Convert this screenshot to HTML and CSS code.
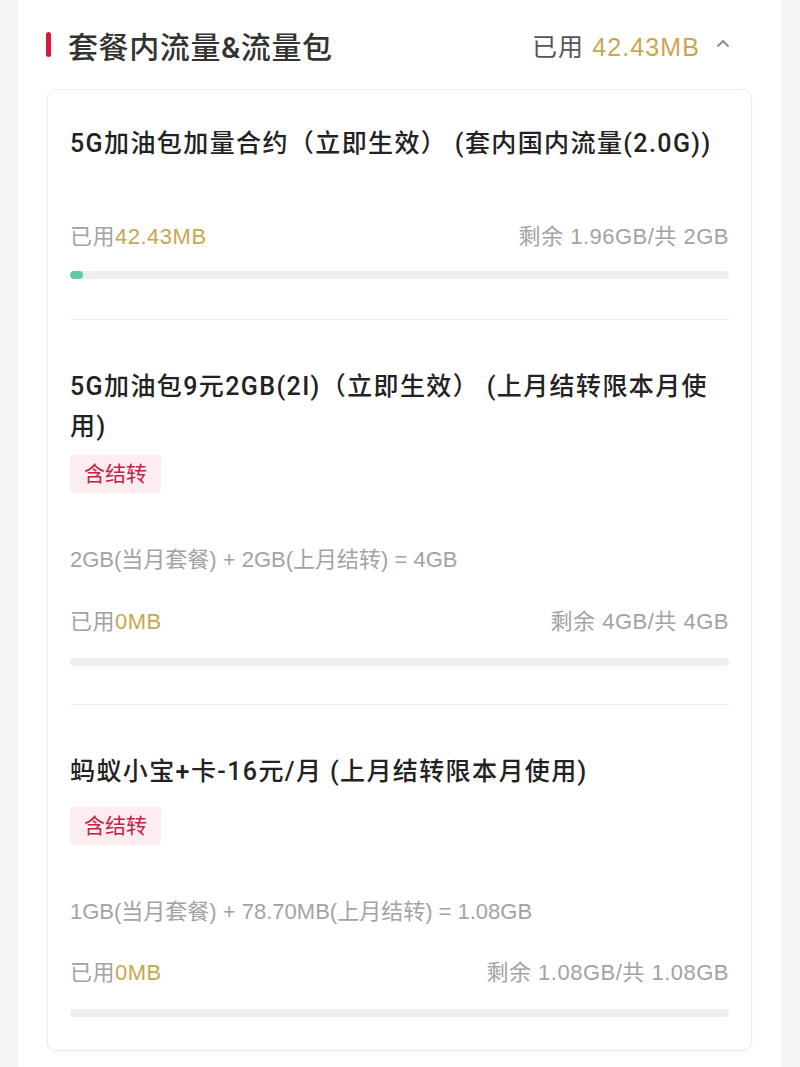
FILE: index.html
```html
<!DOCTYPE html>
<html lang="zh-CN">
<head>
<meta charset="utf-8">
<title>套餐内流量&amp;流量包</title>
<link rel="stylesheet" href="styles.css">
</head>
<body>
<div class="panel">
  <div class="header">
    <div class="head-left">
      <span class="mark"></span>
      <h1 class="head-title">套餐内流量&amp;流量包</h1>
    </div>
    <div class="head-right">
      <span class="head-used">已用 <span class="gold">42.43MB</span></span>
      <svg class="chev" width="14" height="10" viewBox="0 0 14 10"><polyline points="2,8 7,3 12,8" fill="none" stroke="#8a8a8a" stroke-width="1.8" stroke-linecap="round" stroke-linejoin="round"/></svg>
    </div>
  </div>
  <div class="card">
    <div class="item first">
      <div class="title">5G加油包加量合约（立即生效） (套内国内流量(2.0G))</div>
      <div class="row row-first"><span>已用<span class="gold">42.43MB</span></span><span>剩余 1.96GB/共 2GB</span></div>
      <div class="bar bar-first"><div class="fill" style="width:2%"></div></div>
    </div>
    <div class="item">
      <div class="title">5G加油包9元2GB(2I)（立即生效） (上月结转限本月使用)</div>
      <div class="tag">含结转</div>
      <div class="formula">2GB(当月套餐) + 2GB(上月结转) = 4GB</div>
      <div class="row"><span>已用<span class="gold">0MB</span></span><span>剩余 4GB/共 4GB</span></div>
      <div class="bar"><div class="fill" style="width:0%"></div></div>
    </div>
    <div class="item last">
      <div class="title">蚂蚁小宝+卡-16元/月 (上月结转限本月使用)</div>
      <div class="tag tag-low">含结转</div>
      <div class="formula">1GB(当月套餐) + 78.70MB(上月结转) = 1.08GB</div>
      <div class="row row-last"><span>已用<span class="gold">0MB</span></span><span>剩余 1.08GB/共 1.08GB</span></div>
      <div class="bar"><div class="fill" style="width:0%"></div></div>
    </div>
  </div>
</div>
</body>
</html>
```

FILE: styles.css
```css
* { box-sizing: border-box; }
html, body { margin: 0; padding: 0; }
body {
  background: #f4f4f5;
  font-family: "Liberation Sans", "Noto Sans CJK SC", sans-serif;
  color: #333;
}
.panel {
  margin: 0 19px 0 18px;
  background: #fff;
  min-height: 1067px;
  padding: 0 29px;
}
.header {
  height: 89px;
  display: flex;
  align-items: center;
  justify-content: space-between;
}
.head-left { display: flex; align-items: center; }
.mark {
  width: 5px;
  height: 25px;
  border-radius: 3px;
  background: #d51b3c;
  margin-left: -1px;
  margin-right: 17px;
}
.head-title {
  margin: 0;
  font-size: 30px;
  font-weight: 500;
  letter-spacing: 0.6px;
  color: #333;
  font-family: "Roboto", "Noto Sans CJK SC", sans-serif;
}
.head-right {
  display: flex;
  align-items: center;
  margin-right: 22px;
}
.head-used { font-size: 25px; letter-spacing: 1.1px; color: #555; }
.gold { color: #c9a650; }
.chev { margin-left: 16px; margin-top: -3px; }
.card {
  border: 1px solid #ececec;
  border-radius: 9px;
  padding: 0 22px;
  box-shadow: 0 1px 3px rgba(0,0,0,0.04);
}
.item {
  padding: 47px 0 38px;
  border-bottom: 1px solid #ececec;
}
.item.first { padding-top: 34px; padding-bottom: 40px; }
.item.last { border-bottom: none; padding-bottom: 33px; }
.title {
  font-size: 25px;
  line-height: 40px;
  font-weight: 500;
  letter-spacing: 1.4px;
  color: #222;
  font-family: "Roboto", "Noto Sans CJK SC", sans-serif;
}
.tag {
  display: inline-block;
  margin-top: 8px;
  height: 38px;
  line-height: 38px;
  padding: 0 14px;
  border-radius: 4px;
  background: #fdedf0;
  color: #c3224a;
  font-size: 21px;
}
.tag-low { margin-top: 15px; }
.formula {
  margin-top: 52px;
  font-size: 22px;
  line-height: 30px;
  color: #a3a3a3;
}
.row {
  margin-top: 32px;
  display: flex;
  justify-content: space-between;
  font-size: 22px;
  letter-spacing: 0.5px;
  line-height: 30px;
  color: #a3a3a3;
}
.row-first { margin-top: 58px; }
.row-last { margin-top: 31px; }
.bar {
  margin-top: 21px;
  height: 8px;
  border-radius: 4px;
  background: #efefef;
  overflow: hidden;
}
.bar-first { margin-top: 19px; }
.fill {
  height: 100%;
  min-width: 0;
  background: #5ecba2;
  border-radius: 4px;
}
```
